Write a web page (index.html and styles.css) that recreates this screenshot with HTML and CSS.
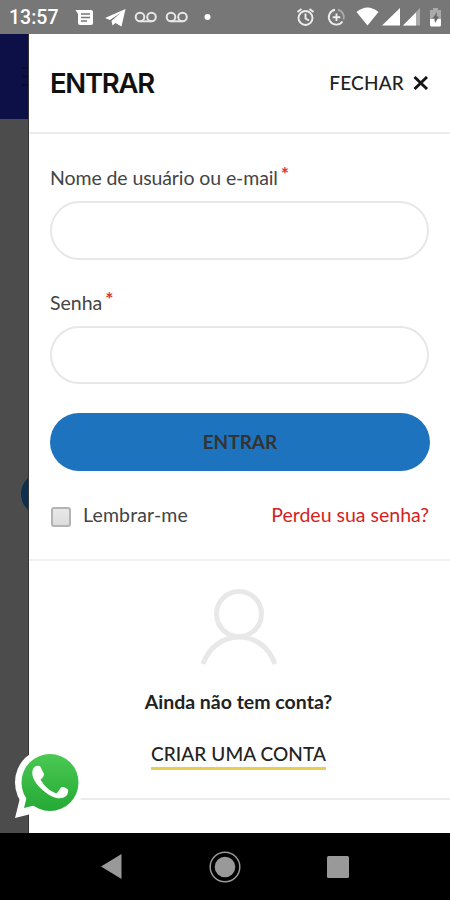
FILE: index.html
```html
<!DOCTYPE html>
<html lang="pt-BR">
<head>
<meta charset="utf-8">
<meta name="viewport" content="width=device-width">
<title>Entrar</title>
<link rel="stylesheet" href="styles.css">
</head>
<body>
<div class="phone">
  <header class="status">
    <span class="clock">13:57</span>
    <svg class="status-left" width="140" height="34" viewBox="75 0 140 34">
      <path fill="#fff" d="M75.500 10H91Q93 10 93 12V23Q93 25 91 25H80Q78 25 78 23V14Z"/>
      <path stroke="#777" stroke-width="1.500" d="M81 14H90M81 17.500H90M81 21H87"/>
      <path fill="#fff" d="M105 18L125.500 9L121.500 26.500L115.500 23L112.500 25.500L111.500 21L121 12.500L110 20Z"/><path fill="#fff" d="M113 21L121.500 12.500L121 25.500Z"/>
      <g fill="none" stroke="#e8e8e8" stroke-width="2"><circle cx="140" cy="17" r="4.300"/><circle cx="151.500" cy="17" r="4.300"/><path d="M140 21.300H151.500"/><circle cx="171" cy="17" r="4.300"/><circle cx="182.500" cy="17" r="4.300"/><path d="M171 21.300H182.500"/></g>
      <circle cx="207.500" cy="17" r="3" fill="#fff"/>
    </svg>
    <svg class="status-right" width="152" height="34" viewBox="295 0 152 34">
      <g fill="none" stroke="#eee" stroke-width="1.900"><circle cx="305.500" cy="18" r="7"/><path d="M305.500 13.500V18.500L309 20.500M297.500 12L301.500 9M309.500 9L313.500 12"/>
      <path d="M335 9.800A7.500 7.500 0 1 0 342.500 21.500M336.500 13.500V21M332.700 17.200H340.300"/><path stroke="#aaa" d="M338 9.800A7.500 7.500 0 0 1 343.500 19.500"/></g>
      <path fill="#fff" d="M356.500 12Q367.500 3 378.500 12L367.500 25.500ZM400 8V25.500H382Z"/>
      <path fill="#aaa" d="M420 8V25.500H403Z"/><path fill="#fff" d="M416 12.500V25.500H403Z"/>
      <path fill="#aaa" d="M430 10H433V8H438V10H441V20H430Z"/><path fill="#fff" d="M430 19H434L435 22L437 19H441V25Q441 26.500 439.500 26.500H431.500Q430 26.500 430 25Z"/><path fill="#666" d="M437 12L432.500 18.500H435V23L439 16.500H436.500Z"/>
    </svg>
  </header>
  <main class="screen">
    <div class="backdrop">
      <div class="site-bar"><svg width="8" height="22" viewBox="0 0 8 22"><path d="M1 2H8M1 10.500H8M1 19H8" stroke="#080c30" stroke-width="2"/></svg></div>
      <div class="site-button"></div>
    </div>
    <section class="drawer">
      <div class="heading">
        <h1>ENTRAR</h1>
        <a class="close"><span>FECHAR</span><svg width="16" height="14" viewBox="0 0 16 14"><path d="M1.500 1L14 13M14 1L1.500 13" stroke="#151515" stroke-width="2.900"/></svg></a>
      </div>
      <form class="login">
        <label for="user"><span class="user-text">Nome de usuário ou e-mail</span> <b>*</b></label>
        <input id="user" type="text">
        <label for="pass"><span class="pass-text">Senha</span> <b>*</b></label>
        <input id="pass" type="password">
        <button type="button"><span>ENTRAR</span></button>
        <div class="options">
          <span class="check"></span><span class="remember">Lembrar-me</span><a class="lost">Perdeu sua senha?</a>
        </div>
      </form>
      <div class="register">
        <svg width="78" height="78" viewBox="0 0 78 78" fill="none" stroke="#e8e8e8" stroke-width="5"><circle cx="39" cy="26" r="22.500"/><path d="M3 76C9 59 23 49 39 49S69 59 75 76"/></svg>
        <p><span>Ainda não tem conta?</span></p>
        <a><span>CRIAR UMA CONTA</span></a>
      </div>
    </section>
    <svg class="whatsapp" width="76" height="74" viewBox="0 0 76 74">
      <defs><linearGradient id="green" gradientUnits="userSpaceOnUse" x1="0" y1="5" x2="0" y2="63"><stop stop-color="#4bc953"/><stop offset="1" stop-color="#24aa35"/></linearGradient></defs>
      <g fill="#fff"><circle cx="39" cy="34.500" r="35"/><path d="M4 70L9 50L24 65Z"/></g>
      <g fill="url(#green)"><circle cx="39" cy="34.500" r="28.500"/><path d="M13 60L16.500 46L27 56.500Z"/></g>
      <path fill="#fff" d="M22 21Q24 17 29 18Q31 22 33 26Q33 29 29.500 31.500C33 38 38 42.500 45.500 45.500Q48 42.500 50 39.500Q52 38 56.500 41Q58 43 56 47C51 53 41 50 34 44C25 37 19 28 22 21Z"/>
    </svg>
  </main>
  <nav class="android">
    <svg width="21" height="25" viewBox="0 0 21 25"><path fill="#999" d="M0 12.500L20.500 0V25Z"/></svg>
    <svg width="32" height="32" viewBox="0 0 32 32"><circle cx="16" cy="16" r="14.800" fill="none" stroke="#999" stroke-width="1.500"/><circle cx="16" cy="16" r="10.300" fill="#999"/></svg>
    <svg width="22" height="22" viewBox="0 0 22 22"><rect width="22" height="22" rx="1.500" fill="#999"/></svg>
  </nav>
</div>
</body>
</html>
```
FILE: styles.css
```css
* { box-sizing: border-box; }
body { margin: 0; background: #000; font-family: Lato, sans-serif; color: #444; }
.phone { width: 450px; height: 900px; overflow: hidden; display: flex; flex-direction: column; }
.status { height: 34px; flex: none; background: #777; display: flex; color: #fff; }
.clock { width: 66px; padding-left: 9px; font: 500 19.5px/36px Roboto, sans-serif; white-space: nowrap; }
.status-left { margin-left: 9px; }
.status-right { margin-left: 80px; }
.screen { height: 799px; flex: none; display: flex; position: relative; }
.backdrop { width: 29px; flex: none; background: #4c4c4c; border-right: 1px solid #353535; overflow: hidden; }
.site-bar { height: 85px; background: #0c1047; padding: 32px 0 0 21px; }
.site-button { width: 44px; height: 44px; margin: 353px 0 0 21px; border-radius: 22px; background: #0d304f; }
.drawer { flex: 1; background: #fff; }
.heading { height: 100px; border-bottom: 2px solid #ececec; padding: 0 21px; display: flex; justify-content: space-between; align-items: center; }
h1 { margin: 0; font: 600 27.5px/40px Inter, sans-serif; letter-spacing: -1.3px; color: #111; }
.close { display: flex; align-items: center; gap: 9px; color: #222; font-size: 19px; line-height: 28px; letter-spacing: .2px; font-weight: 500; }
.login { height: 427px; border-bottom: 2px solid #f1f1f1; padding: 29px 21px 0; display: flex; flex-direction: column; }
label { height: 30px; flex: none; font-size: 19.5px; line-height: 30px; white-space: nowrap; }
.user-text { letter-spacing: -.1px; }
label b { position: relative; top: -4px; left: -2px; color: #d33; font-weight: 700; }
input { width: 379px; height: 58px; flex: none; margin: 8px 0 29px; border: 2.5px solid #e7e7e7; border-radius: 30px; background: #fff; padding: 0 20px; }
#user { height: 59px; margin-bottom: 28px; }
button { height: 58px; flex: none; border: 0; border-radius: 29px; background: #1e73be; color: #333; font: 700 19px Lato, sans-serif; letter-spacing: 0; padding: 0 0 2px; margin-right: -1px; }
.options { margin-top: 29px; display: flex; align-items: center; height: 30px; font-size: 19.5px; white-space: nowrap; }
.remember, .lost { position: relative; top: -1px; }
.check { width: 20px; height: 20px; margin: 3px 12px 0 1px; border: 2px solid #b4b4b4; border-radius: 3px; background: linear-gradient(#e8e8e8, #ddd); }
.remember { letter-spacing: .15px; }
.lost { margin-left: auto; color: #d51e1e; }
.register { height: 239px; border-bottom: 2px solid #ececec; display: flex; flex-direction: column; align-items: center; padding: 27px 2px 0 0; color: #222; }
.register p { margin: 21px 0 0; font: 700 19.5px/30px Lato, sans-serif; }
.register a { margin-top: 23px; height: 30px; border-bottom: 3px solid #e8cd50; font: 500 19px/27px Lato, sans-serif; letter-spacing: .1px; }
.whatsapp { position: absolute; left: 11px; top: 714px; }
.android { flex: 1; background: #000; display: flex; align-items: center; padding-left: 101px; }
.android svg:nth-child(2) { margin-left: 87px; }
.android svg:nth-child(3) { margin-left: 86px; }
```
